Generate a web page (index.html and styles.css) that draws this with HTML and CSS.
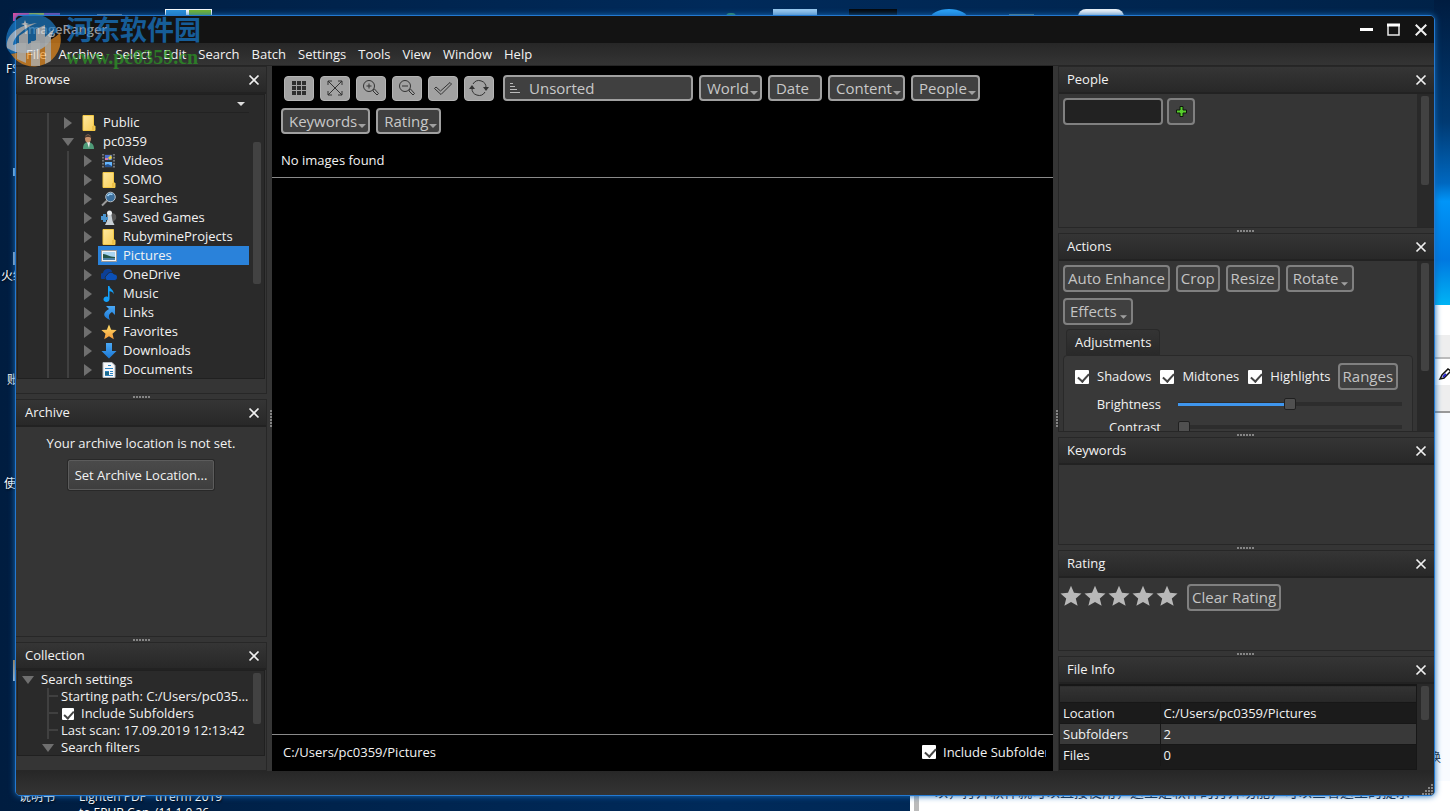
FILE: index.html
```html
<!DOCTYPE html>
<html lang="en">
<head>
<meta charset="utf-8">
<title>ImageRanger</title>
<link rel="stylesheet" href="styles.css">
</head>
<body>
<svg class="defs" aria-hidden="true">
  <defs>
    <linearGradient id="gold" x1="0" y1="0" x2="1" y2="1"><stop offset="0" stop-color="#ffe9a0"/><stop offset="1" stop-color="#f7cd55"/></linearGradient>
    <linearGradient id="azure" x1="0" y1="0" x2="0" y2="1"><stop offset="0" stop-color="#4aa8f5"/><stop offset="1" stop-color="#1c78d4"/></linearGradient>
    <linearGradient id="starfill" x1="0" y1="0" x2="0" y2="1"><stop offset="0" stop-color="#ffdf6a"/><stop offset="1" stop-color="#f59a3a"/></linearGradient>
    <symbol id="close" viewBox="0 0 12 12"><path d="M1.5 1.5l9 9M10.500 1.500l-9 9" stroke="#f0f0f0" stroke-width="1.700" fill="none"/></symbol>
    <symbol id="folder" viewBox="0 0 16 16"><path d="M2 0.500h10.500V11h1.500v4.500H2z" fill="url(#gold)" stroke="#f3c845" stroke-width="1"/><path d="M12 11v4" stroke="#e0ad32"/></symbol>
    <symbol id="star" viewBox="0 0 22 22"><path d="M11 .8l3 7 7.500.6-5.700 5 1.800 7.400L11 16.900 4.400 20.800l1.800-7.400-5.700-5 7.500-.6z"/></symbol>
    <symbol id="drop" viewBox="0 0 8 4"><path d="M0 0h8l-4 4z" fill="#a0a0a0"/></symbol>
    <symbol id="right" viewBox="0 0 8 12"><path d="M0 0l8 6-8 6z" fill="#6f6f6f"/></symbol>
    <symbol id="down" viewBox="0 0 12 8"><path d="M0 0h12l-6 8z" fill="#6f6f6f"/></symbol>
  </defs>
</svg>
<div class="desktop">
  <div class="wallpaper" aria-hidden="true">
    <span class="tile tile-pink"></span><span class="tile tile-duo"></span><span class="tile tile-gray"></span>
    <span class="tile tile-green"></span><span class="tile tile-sky"></span><span class="tile tile-black"></span>
    <span class="tile tile-round"></span><span class="tile tile-line"></span><span class="tile tile-white"></span>
    <span class="label label-fs">FS</span><span class="label label-huo">火绒</span><span class="label label-zhang">账</span><span class="label label-shi">使</span>
    <span class="tile tile-edge-a"></span><span class="tile tile-edge-b"></span><span class="tile tile-edge-c"></span>
    <span class="label label-manual">说明书</span><span class="label label-pdf">Lighten PDF</span><span class="label label-term">tiTerm 2019</span>
    <span class="label label-epub">to EPUB Con</span><span class="label label-ver">(11.1.0.26</span>
    <div class="notes-edge"><svg width="12" height="16" viewBox="0 0 12 16"><path d="M2 13l2-4 6-6 3 2-7 7z" fill="#fff" stroke="#111" stroke-width="1.500"/><path d="M5 11l3-3" stroke="#22c" stroke-width="2"/></svg></div>
    <div class="notes-bottom">以，打开软件就可以直接使用，这里是软件的打开功能，可以查看这里的提示</div>
    <span class="label label-huan">换</span>
  </div>

  <main class="window">
    <header class="titlebar">
      <h1>ImageRanger</h1>
      <div class="controls">
        <button aria-label="Minimize"><svg width="14" height="14"><path d="M0 5h13v3H0z" fill="#fff"/></svg></button>
        <button aria-label="Maximize"><svg width="14" height="14"><path d="M1 2h11v10H1z" fill="none" stroke="#e8e8e8" stroke-width="1.500"/><path d="M0 .5h13v3H0z" fill="#fff"/></svg></button>
        <button aria-label="Close"><svg width="14" height="14" viewBox="0 0 12 12"><use href="#close"/></svg></button>
      </div>
    </header>
    <nav class="menubar">
      <button>File</button><button>Archive</button><button>Select</button><button>Edit</button><button>Search</button><button>Batch</button><button>Settings</button><button>Tools</button><button>View</button><button>Window</button><button>Help</button>
    </nav>

    <div class="work">
      <aside class="dock dock-left">
        <section class="panel">
          <header class="panel-head"><h2>Browse</h2><button aria-label="Close Browse"><svg width="12" height="12"><use href="#close"/></svg></button></header>
          <div class="inset browse">
            <div class="combo"><select aria-label="Drive"><option></option></select><svg width="8" height="4"><path d="M0 0h8l-4 4z" fill="#ddd"/></svg></div>
            <div class="scroller">
              <ul class="tree">
                <li class="lvl1"><svg class="arrow" width="8" height="12"><use href="#right"/></svg><svg class="ico" width="16" height="16"><use href="#folder"/></svg><span>Public</span></li>
                <li class="lvl1"><svg class="arrow" width="12" height="8"><use href="#down"/></svg><svg class="ico" width="16" height="16"><path d="M2 15c0-5 2-7 5-7s6 2 6 7z" fill="#4f9a78"/><path d="M6 8l2 6 1-6z" fill="#eee"/><ellipse cx="7" cy="4.500" rx="3" ry="4" fill="#c9926c"/><path d="M3.500 4C3.500 0 10.500 0 10.500 4 9 2.500 5 2.500 3.500 4z" fill="#4a3a30"/></svg><span>pc0359</span></li>
                <li class="lvl2"><svg class="arrow" width="8" height="12"><use href="#right"/></svg><svg class="ico" width="16" height="16"><path d="M1 1h13v14H1z" fill="#33363a"/><path d="M2 1v14M13 1v14" stroke="#8a8a8a" stroke-width="1.500" stroke-dasharray="1.500 1.500"/><path d="M4 2h7v5H4z" fill="#4a6fd0"/><path d="M4 9h7v5H4z" fill="#65b6ff"/><path d="M7 5l3-3 1 3-2 2z" fill="#e8cc3b"/><path d="M4 5h3v2H4z" fill="#d27ab0"/><path d="M4 12l3-1 4 2v1H4z" fill="#24518e"/></svg><span>Videos</span></li>
                <li class="lvl2"><svg class="arrow" width="8" height="12"><use href="#right"/></svg><svg class="ico" width="16" height="16"><use href="#folder"/></svg><span>SOMO</span></li>
                <li class="lvl2"><svg class="arrow" width="8" height="12"><use href="#right"/></svg><svg class="ico" width="16" height="16"><path d="M1 14.500l5-5" stroke="#9b9b9b" stroke-width="2"/><circle cx="9.500" cy="6" r="4.800" fill="#3c6f9c" stroke="#b5bec6" stroke-width="1"/><path d="M6.500 5a4 4 0 0 1 5-1.500" stroke="#9fd0f4" stroke-width="1.500" fill="none"/></svg><span>Searches</span></li>
                <li class="lvl2"><svg class="arrow" width="8" height="12"><use href="#right"/></svg><svg class="ico" width="16" height="16"><path d="M10 3c4 0 6 2 5 6l-4 4z" fill="#555"/><circle cx="8.500" cy="3" r="2.500" fill="#e9edf0"/><path d="M6.500 5h4l1 6 2 4H4l2-4z" fill="#c8d0d6"/><path d="M0 6h2V4h3v3h2v3H5v2H2v-2H0z" fill="#4a94cf"/></svg><span>Saved Games</span></li>
                <li class="lvl2"><svg class="arrow" width="8" height="12"><use href="#right"/></svg><svg class="ico" width="16" height="16"><use href="#folder"/></svg><span>RubymineProjects</span></li>
                <li class="lvl2 selected"><svg class="arrow" width="8" height="12"><use href="#right"/></svg><svg class="ico" width="16" height="16"><path d="M.5 2.500h15v11H.5z" fill="#f4f4f4" stroke="#999"/><path d="M2 4h12v8H2z" fill="#a9d4f0"/><path d="M2 6c4 0 6 3 12 3v3H2z" fill="#235548"/><path d="M2 10h12v2H2z" fill="#4c80a6"/></svg><span>Pictures</span></li>
                <li class="lvl2"><svg class="arrow" width="8" height="12"><use href="#right"/></svg><svg class="ico" width="16" height="16"><path d="M2 12a3 3 0 0 1 0-6 5 5 0 0 1 9-2l-2 8z" fill="#0c3f96"/><path d="M6 13.500a3 3 0 0 1 0-5.500 4 4 0 0 1 7-1 3.300 3.300 0 0 1 1 6.500z" fill="#0b50b8" stroke="#252525" stroke-width=".7"/></svg><span>OneDrive</span></li>
                <li class="lvl2"><svg class="arrow" width="8" height="12"><use href="#right"/></svg><svg class="ico" width="16" height="16"><path d="M7 0h1.500c0 3 5 4 4 8-.6-2-2-2.500-4-2.800V13c0 4-6 3.500-6 .5 0-2.500 2.500-3.500 4.500-2.500z" fill="#14a0fa"/></svg><span>Music</span></li>
                <li class="lvl2"><svg class="arrow" width="8" height="12"><use href="#right"/></svg><svg class="ico" width="16" height="16"><path d="M5 1h9v9l-3-3c-3 2-4 4-2 8-7-3-8-7-1-11z" fill="url(#azure)"/></svg><span>Links</span></li>
                <li class="lvl2"><svg class="arrow" width="8" height="12"><use href="#right"/></svg><svg class="ico" width="16" height="16" viewBox="0 0 22 22" fill="url(#starfill)"><use href="#star"/></svg><span>Favorites</span></li>
                <li class="lvl2"><svg class="arrow" width="8" height="12"><use href="#right"/></svg><svg class="ico" width="16" height="16"><path d="M5 0h6v8h4.500L8 15.500.5 8H5z" fill="url(#azure)"/></svg><span>Downloads</span></li>
                <li class="lvl2"><svg class="arrow" width="8" height="12"><use href="#right"/></svg><svg class="ico" width="16" height="16"><path d="M2 .5h9l3 3v12H2z" fill="#f6f8fa" stroke="#b5bbc0"/><path d="M7 3.500h3M4 6.500h8M4 9.500h4M9 9.500h3M9 11.500h3M4 13.500h8" stroke="#2d84c4"/><path d="M4 10h4v3H4z" fill="#1c6a8a"/></svg><span>Documents</span></li>
              </ul>
              <div class="bar"><i class="thumb thumb-tree"></i></div>
            </div>
          </div>
        </section>
        <div class="splitter"></div>
        <section class="panel">
          <header class="panel-head"><h2>Archive</h2><button aria-label="Close Archive"><svg width="12" height="12"><use href="#close"/></svg></button></header>
          <div class="panel-body archive"><p>Your archive location is not set.</p><button class="plain">Set Archive Location...</button></div>
        </section>
        <div class="splitter"></div>
        <section class="panel">
          <header class="panel-head"><h2>Collection</h2><button aria-label="Close Collection"><svg width="12" height="12"><use href="#close"/></svg></button></header>
          <div class="inset scroller">
            <ul class="tree compact">
              <li class="top"><svg width="12" height="8"><use href="#down"/></svg><span>Search settings</span></li>
              <li class="leaf"><span>Starting path: C:/Users/pc0359/Pictures</span></li>
              <li class="leaf"><label class="check small"><input type="checkbox" checked>Include Subfolders</label></li>
              <li class="leaf"><span>Last scan: 17.09.2019 12:13:42</span></li>
              <li class="sub"><svg width="12" height="8"><use href="#down"/></svg><span>Search filters</span></li>
            </ul>
            <div class="bar narrow"><i class="thumb thumb-collection"></i></div>
          </div>
        </section>
      </aside>
      <div class="splitter vertical"></div>

      <section class="viewer">
        <div class="toolbar">
          <div class="tools">
            <button aria-label="Thumbnails"><svg width="20" height="20"><path d="M3 3h4v4H3zM8 3h4v4H8zM13 3h4v4h-4zM3 8h4v4H3zM8 8h4v4H8zM13 8h4v4h-4zM3 13h4v4H3zM8 13h4v4H8zM13 13h4v4h-4z" fill="#2e2e2e" stroke="none"/></svg></button>
            <button aria-label="Fit to window"><svg width="20" height="20"><path d="M3 3l14 14M17 3L3 17M3 7V3h4M13 3h4v4M17 13v4h-4M7 17H3v-4"/></svg></button>
            <button aria-label="Zoom in"><svg width="20" height="20"><circle cx="8" cy="8" r="5.500"/><path d="M8 5.500v5M5.500 8h5M12 12l1.500-1 4 4.500-1.500 1.500-4-4z"/></svg></button>
            <button aria-label="Zoom out"><svg width="20" height="20"><circle cx="8" cy="8" r="5.500"/><path d="M5 8h6M12 12l1.500-1 4 4.500-1.500 1.500-4-4z"/></svg></button>
            <button aria-label="Select all"><svg width="20" height="20"><path d="M1.500 10.500l1.500-1.500 4.500 4L17 4.500l1.500 1.500L8 16.500z"/></svg></button>
            <button aria-label="Refresh"><svg width="20" height="20"><path d="M4 6a7 7 0 0 1 13 4M16 14A7 7 0 0 1 3 10"/><path d="M14 9h6l-3 4zM0 11h6L3 7z" fill="#333" stroke="none"/></svg></button>
          </div>
          <div class="sort"><svg width="12" height="14"><path d="M1 2.500h3M1 5.500h5M1 8.500h7M1 11.500h10" stroke="#bbb"/></svg><select aria-label="Sort order"><option>Unsorted</option></select></div>
          <button class="chip">World<svg width="8" height="4"><use href="#drop"/></svg></button>
          <button class="chip date">Date</button>
          <button class="chip">Content<svg width="8" height="4"><use href="#drop"/></svg></button>
          <button class="chip">People<svg width="8" height="4"><use href="#drop"/></svg></button>
          <button class="chip">Keywords<svg width="8" height="4"><use href="#drop"/></svg></button>
          <button class="chip">Rating<svg width="8" height="4"><use href="#drop"/></svg></button>
        </div>
        <p class="message">No images found</p>
        <div class="canvas"></div>
        <footer class="pathbar"><span>C:/Users/pc0359/Pictures</span><label class="check"><input type="checkbox" checked><span>Include Subfolders</span></label></footer>
      </section>
      <div class="splitter vertical"></div>

      <aside class="dock dock-right">
        <section class="panel">
          <header class="panel-head"><h2>People</h2><button aria-label="Close People"><svg width="12" height="12"><use href="#close"/></svg></button></header>
          <div class="scroller panel-body">
            <div class="people"><input type="text" aria-label="Person name"><button class="action add" aria-label="Add person"><svg width="11" height="11"><path d="M4 .5h3V4h3.500v3H7v3.500H4V7H.5V4H4z" fill="#57cf2c" stroke="#0c1a08"/></svg></button></div>
            <div class="bar wide"><i class="thumb thumb-people"></i></div>
          </div>
        </section>
        <div class="splitter"></div>
        <section class="panel">
          <header class="panel-head"><h2>Actions</h2><button aria-label="Close Actions"><svg width="12" height="12"><use href="#close"/></svg></button></header>
          <div class="scroller panel-body">
            <div class="actions">
              <div class="action-row">
                <button class="action">Auto Enhance</button><button class="action">Crop</button><button class="action">Resize</button><button class="action menu">Rotate<svg width="7" height="4"><use href="#drop"/></svg></button><button class="action menu">Effects<svg width="7" height="4"><use href="#drop"/></svg></button>
              </div>
              <h3 class="tab">Adjustments</h3>
              <div class="tabpage">
                <div class="tones">
                  <label class="check"><input type="checkbox" checked>Shadows</label>
                  <label class="check"><input type="checkbox" checked>Midtones</label>
                  <label class="check"><input type="checkbox" checked>Highlights</label>
                  <button class="action">Ranges</button>
                </div>
                <div class="slider"><label for="brightness">Brightness</label><input id="brightness" class="half" type="range" value="50"></div>
                <div class="slider"><label for="contrast">Contrast</label><input id="contrast" type="range" value="0"></div>
              </div>
            </div>
            <div class="bar wide"><i class="thumb thumb-actions"></i></div>
          </div>
        </section>
        <div class="splitter"></div>
        <section class="panel">
          <header class="panel-head"><h2>Keywords</h2><button aria-label="Close Keywords"><svg width="12" height="12"><use href="#close"/></svg></button></header>
          <div class="panel-body"></div>
        </section>
        <div class="splitter"></div>
        <section class="panel">
          <header class="panel-head"><h2>Rating</h2><button aria-label="Close Rating"><svg width="12" height="12"><use href="#close"/></svg></button></header>
          <div class="panel-body rating">
            <button class="star" aria-label="1 star"><svg width="22" height="22"><use href="#star"/></svg></button><button class="star" aria-label="2 stars"><svg width="22" height="22"><use href="#star"/></svg></button><button class="star" aria-label="3 stars"><svg width="22" height="22"><use href="#star"/></svg></button><button class="star" aria-label="4 stars"><svg width="22" height="22"><use href="#star"/></svg></button><button class="star" aria-label="5 stars"><svg width="22" height="22"><use href="#star"/></svg></button>
            <button class="action">Clear Rating</button>
          </div>
        </section>
        <div class="splitter"></div>
        <section class="panel">
          <header class="panel-head"><h2>File Info</h2><button aria-label="Close File Info"><svg width="12" height="12"><use href="#close"/></svg></button></header>
          <div class="scroller panel-body">
            <div class="info">
              <table>
                <colgroup><col class="name-col"><col></colgroup>
                <thead><tr><td colspan="2"></td></tr></thead>
                <tbody>
                  <tr><th scope="row">Location</th><td>C:/Users/pc0359/Pictures</td></tr>
                  <tr><th scope="row">Subfolders</th><td>2</td></tr>
                  <tr><th scope="row">Files</th><td>0</td></tr>
                </tbody>
              </table>
            </div>
            <div class="bar wide"><i class="thumb thumb-info"></i></div>
          </div>
        </section>
      </aside>
    </div>
    <footer class="statusbar"><svg width="12" height="12"><path d="M9 1h2v2H9zM6 4h2v2H6zM9 4h2v2H9zM3 7h2v2H3zM6 7h2v2H6zM9 7h2v2H9zM0 10h2v2H0zM3 10h2v2H3zM6 10h2v2H6zM9 10h2v2H9z" fill="#858585"/></svg></footer>
  </main>

  <div class="watermark">
    <svg width="56" height="56" viewBox="0 0 56 56">
      <path d="M1 32A27 27 0 0 1 53 20C40 30 22 40 6 43 3 40 1 36 1 32z" fill="#1b7cc8"/>
      <path d="M6 43C24 40 44 32 55 22A27 27 0 0 1 6 43z" fill="#f0901e"/>
      <path d="M2 37C0 25 12 14 32 12 19 17 8 26 8 34l6-2V25l9-6v14l8-4V18l9-4v12l9-8-4 12C38 41 18 47 2 37z" fill="#d9dee2"/>
      <path d="M12 32h9v20l-9-4zM26 30h9v25h-9zM40 26h6v24l-6 3z" fill="#e4e8eb" opacity=".8"/>
      <path d="M20 9l1 3 3 1-3 1-1 3-1-3-3-1 3-1z" fill="#fff"/>
    </svg>
    <div class="watermark-text"><strong>河东软件园</strong><em>www.pc0359.cn</em></div>
  </div>
</div>
</body>
</html>
```

FILE: styles.css
```css
* { box-sizing: border-box; }
body { margin: 0; font: 13px/17px "Open Sans", "Noto Sans CJK SC", sans-serif; color: #f2f2f2; }
button, input, select { font: inherit; color: inherit; margin: 0; }
button { background: none; border: 0; padding: 0; }
h1, h2, h3, p, ul { margin: 0; padding: 0; font-size: inherit; font-weight: 400; }
svg { display: block; flex: none; }
.defs { position: absolute; width: 0; height: 0; }

.desktop { position: relative; height: 100vh; padding: 15px; overflow: hidden; background: linear-gradient(90deg, #001d40, #002a5a 50%, #002248); }
.wallpaper { position: absolute; z-index: 0; inset: 0; overflow: hidden; }
.wallpaper::after { content: ""; position: absolute; z-index: -1; top: 0; right: 0; width: 16px; height: 305px; background: linear-gradient(#001c40, #013a72 40%, #0068c0 60%, #0095f8 66%, #0078e0 85%, #00b4f5); }
.tile { position: absolute; top: 9px; height: 8px; }
.tile-pink { left: 13px; top: 13px; width: 47px; background: linear-gradient(90deg, #e54aa0 35%, #b5c13a 35% 65%, #8a4bb0 65%); }
.tile-duo { left: 165px; width: 47px; border: 1px solid #fff; background: linear-gradient(90deg, #2d90d8 45%, #fff 45% 50%, #76b82e 50%); }
.tile-gray { left: 97px; top: 14px; width: 25px; background: #77808a; }
.tile-green { left: 726px; top: 13px; width: 10px; border-radius: 5px; background: #39945c; }
.tile-sky { left: 773px; width: 44px; background: #9bc9ef; }
.tile-black { left: 849px; width: 48px; background: #050608; }
.tile-round { left: 930px; width: 38px; height: 20px; border-radius: 50%; background: #2ba0f5; }
.tile-line { left: 1009px; top: 14px; width: 25px; background: #66857c; }
.tile-white { left: 1078px; width: 46px; border-radius: 10px 10px 0 0; background: #eef3f8; }
.tile-edge-a { left: 13px; top: 168px; width: 2px; background: #8fbfe8; }
.tile-edge-b { left: 13px; top: 252px; width: 2px; height: 13px; background: #9fb4cc; }
.tile-edge-c { left: 13px; top: 660px; width: 2px; height: 21px; background: linear-gradient(#d09040, #c5d5e5); }
.label { position: absolute; font-size: 12px; line-height: 16px; white-space: nowrap; color: #fff; text-shadow: 1px 1px 2px #000; }
.label-fs { left: 6px; top: 61px; }
.label-huo { left: 1px; top: 268px; }
.label-zhang { left: 7px; top: 372px; }
.label-shi { left: 4px; top: 476px; }
.label-manual { left: 19px; top: 789px; }
.label-pdf { left: 79px; top: 789px; }
.label-term { left: 155px; top: 789px; }
.label-epub { left: 79px; top: 805px; }
.label-ver { left: 155px; top: 805px; }
.label-huan { left: 1429px; top: 750px; color: #222; text-shadow: none; }
.notes-edge { position: absolute; right: 0; top: 305px; bottom: 0; width: 16px; padding-top: 61px; background: linear-gradient(#fff 30px, #eee 30px 52px, #bbb 52px 54px, #fff 54px 80px, #eee 80px 106px, #999 106px 108px, #f8fbff 108px); }
.notes-edge svg { margin-left: 4px; }
.notes-bottom { position: absolute; left: 910px; right: 0; bottom: 0; height: 30px; padding: 1px 0 0 20px; border-left: 4px solid #fff; background: #fff; box-shadow: inset 5px 0 #bbb; color: #1c2430; font-size: 14px; line-height: 20px; white-space: nowrap; }

.window { position: relative; z-index: 1; display: flex; flex-direction: column; height: 100%; overflow: hidden; border: 1px solid #2479d0; border-radius: 5px; background: #353535; box-shadow: 0 0 6px #1569b8; }
.titlebar { display: flex; justify-content: space-between; align-items: center; flex: none; height: 27px; padding: 0 6px 0 8px; background: #131313; }
.titlebar h1 { color: #9a9a9a; font-weight: 600; }
.controls { display: flex; gap: 13px; }
.menubar { display: flex; flex: none; height: 23px; padding: 0 4px; border-bottom: 1px solid #252525; background: linear-gradient(#272727, #343434); }
.menubar button { padding: 0 6px; }

.work { display: grid; flex: 1; min-height: 0; grid-template-columns: 251px 5px minmax(0, 1fr) 5px 376px; }
.dock { display: grid; grid-template-columns: minmax(0, 1fr); min-height: 0; min-width: 0; }
.dock-left { grid-template-rows: minmax(0, 328fr) 5px minmax(0, 238fr) 5px minmax(0, 129fr); }
.dock-right { grid-template-rows: minmax(0, 162fr) 5px minmax(0, 199fr) 5px minmax(0, 108fr) 5px minmax(0, 101fr) 5px minmax(0, 115fr); }
.splitter { background: repeating-linear-gradient(90deg, #858585 0 2px, transparent 2px 3px) center 2px / 18px 2px no-repeat; }
.splitter.vertical { background: repeating-linear-gradient(#858585 0 2px, transparent 2px 3px) 3px center / 2px 18px no-repeat; }
.panel { display: flex; flex-direction: column; min-height: 0; border: 1px solid #272727; }
.dock-left .panel { border-left: 0; }
.dock-right .panel { border-right: 0; }
.panel-head { display: flex; flex: none; justify-content: space-between; align-items: center; height: 27px; padding: 0 6px 0 9px; border-bottom: 2px solid #222; background: linear-gradient(#353535, #282828); }
.dock-right .panel-head { padding: 0 7px 0 8px; }
.panel-body { flex: 1; min-height: 0; }
.inset { margin: 0 1px 14px; border: 1px solid #202020; background: #2a2a2a; }
.browse { display: flex; flex: 1; flex-direction: column; min-height: 0; }
.combo { display: flex; flex: none; align-items: center; height: 18px; margin-right: 15px; padding-right: 4px; border-bottom: 1px solid #222; }
.combo select { flex: 1; height: 16px; appearance: none; border: 0; background: none; }
.scroller { display: flex; flex: 1; min-height: 0; overflow: hidden; }
.bar { flex: none; width: 15px; padding: 2px 3px 2px 4px; }
.bar.narrow { width: 12px; padding-left: 1px; }
.bar.wide { width: 17px; padding: 2px 5px 2px 4px; background: #292929; }
.thumb { display: block; border-radius: 2px; background: #424242; }
.thumb-tree { height: 142px; margin-top: 27px; }
.thumb-collection { height: 51px; }
.thumb-people { height: 89px; }
.thumb-actions { height: 108px; }
.thumb-info { height: 34px; }
.tree { flex: 1; min-width: 0; list-style: none; }
.tree li { display: flex; align-items: center; height: 19px; white-space: nowrap; }
.browse .tree { background: linear-gradient(#404040, #404040) 29px 0 / 2px 100% no-repeat, linear-gradient(#404040, #404040) 49px 38px / 2px 100% no-repeat; }
.arrow { margin: 0 2px; }
.tree .arrow[width="12"] { margin: 0; }
.ico { margin: 0 6px 0 7px; }
.lvl1 { padding-left: 44px; }
.lvl2 { padding-left: 64px; }
.selected { background: linear-gradient(#2a82da, #2a82da) 80px 0 no-repeat; }
.tree.compact { background: linear-gradient(#404040, #404040) 29px 17px / 2px 51px no-repeat; }
.compact li { height: 17px; }
.compact svg { margin-right: 7px; }
.compact .top { padding-left: 4px; }
.compact .sub { padding-left: 24px; }
.compact .leaf { padding-left: 43px; background: linear-gradient(#404040, #404040) 29px 7px / 11px 2px no-repeat; }
.leaf span { overflow: hidden; text-overflow: ellipsis; }
.archive { display: flex; flex-direction: column; align-items: center; padding-top: 8px; }
.plain { height: 30px; margin-top: 8px; padding: 0 6px; border: 1px solid #5c5c5c; border-radius: 2px; background: linear-gradient(#4a4a4a, #3e3e3e); box-shadow: 0 0 0 1px #282828; }

.check { display: flex; align-items: center; gap: 8px; white-space: nowrap; }
.check input { flex: none; width: 14px; height: 14px; appearance: none; border-radius: 1px; background: #fff; }
.check input::before { content: ""; display: block; width: 9px; height: 5px; margin: 3px 0 0 3px; border: solid #444; border-width: 0 0 2px 2px; transform: rotate(-48deg); }
.check.small { gap: 7px; padding-left: 1px; }
.check.small input { width: 12px; height: 12px; }
.check.small input::before { width: 8px; height: 4px; margin: 3px 0 0 2px; }

.viewer { display: flex; flex-direction: column; min-width: 0; background: #000; }
.toolbar { display: flex; flex-wrap: wrap; gap: 7px 6px; padding: 9px 9px 0; }
.tools { display: flex; align-items: center; gap: 6px; padding: 0 3px; }
.tools button { display: grid; place-items: center; width: 30px; height: 25px; border: 1px solid #b5b5b5; border-radius: 4px; background: #a2a2a2; }
.tools svg { fill: none; stroke: #333; stroke-width: 1; }
.sort { display: flex; align-items: center; width: 190px; height: 26px; padding: 0 4px; gap: 8px; border: 2px solid #a0a0a0; border-radius: 4px; background: #404040; font-size: 15px; color: #c8c8c8; }
.sort select { flex: 1; height: 22px; padding: 0; appearance: none; border: 0; background: none; }
.chip { display: flex; align-items: center; height: 26px; padding: 0 2px 0 6px; border: 2px solid #a0a0a0; border-radius: 4px; background: #404040; font-size: 15px; line-height: 22px; color: #c8c8c8; }
.chip svg { margin-top: 9px; margin-left: 1px; }
.chip.date { padding-right: 11px; }
.message { padding: 17px 9px 8px; border-bottom: 1px solid #8a8a8a; line-height: 18px; }
.canvas { flex: 1; }
.pathbar { display: flex; justify-content: space-between; align-items: center; height: 37px; padding: 0 7px 2px 11px; border-top: 1px solid #8a8a8a; }
.pathbar .check { gap: 7px; width: 124px; overflow: hidden; }

.action { display: flex; flex: none; align-items: center; height: 27px; padding: 0 3px; border: 2px solid #808080; border-radius: 4px; background: #404040; font-size: 15px; color: #c4c4c4; }
.action.menu { padding: 0 4px 0 5px; }
.action.menu svg { margin: 10px 0 0 3px; }
.people { display: flex; flex: 1; align-items: flex-start; gap: 4px; padding: 4px; }
.people input { width: 100px; height: 27px; border: 2px solid #808080; border-radius: 4px; background: #222; }
.action.add { width: 28px; justify-content: center; padding: 0; }
.actions { flex: 1; min-width: 0; padding: 4px; }
.action-row { display: flex; flex-wrap: wrap; gap: 6px; }
.tab { width: max-content; height: 26px; margin: 4px 0 0 3px; padding: 4px 8px; border: 1px solid #292929; border-bottom: 0; border-radius: 4px 4px 0 0; background: linear-gradient(#343434, #292929); }
.tabpage { padding: 7px 11px 0; border: 1px solid #292929; border-radius: 4px; background: #393939; }
.tones { display: flex; align-items: center; }
.tones .check { margin-right: 9px; }
.tones .action { margin-left: -2px; }
.slider { display: grid; grid-template-columns: 86px 1fr; align-items: center; gap: 17px; height: 23px; margin-right: -1px; padding-top: 5px; }
.slider label { text-align: right; }
.slider input { width: 100%; height: 14px; appearance: none; background: linear-gradient(#2d2d2d, #2d2d2d) center / 100% 4px no-repeat; }
.slider .half { background: linear-gradient(#3f96ee, #3f96ee) 0 center / 50% 3px no-repeat, linear-gradient(#2d2d2d, #2d2d2d) center / 100% 4px no-repeat; }
.slider input::-webkit-slider-thumb { width: 12px; height: 12px; appearance: none; border: 1px solid #202020; border-radius: 2px; background: #505050; }
.rating { display: flex; align-items: flex-start; gap: 2px; padding: 6px 1px; }
.star { height: 23px; fill: #b8b8b8; }
.rating .action { margin-left: 7px; }
.info { flex: 1; border: 1px solid #171717; background: #1b1b1b; }
.info table { width: 100%; border-collapse: collapse; table-layout: fixed; }
.name-col { width: 100px; }
.info td, .info th { height: 21px; padding: 0 3px; border-top: 1px solid #171717; font-weight: 400; text-align: left; }
.info th { border-right: 1px solid #171717; }
.info thead td { height: 17px; background: linear-gradient(#333, #282828); }
.info tbody tr:nth-child(2) { background: #393939; }
.statusbar { display: flex; flex: none; justify-content: flex-end; align-items: flex-end; height: 24px; background: linear-gradient(#272727, #343434); }

.watermark { position: absolute; z-index: 2; left: 5px; top: 11px; display: flex; gap: 5px; opacity: .68; pointer-events: none; }
.watermark-text { display: flex; flex-direction: column; }
.watermark strong { font: 700 27px/36px "Noto Sans CJK SC", sans-serif; color: #1880d8; }
.watermark em { font: 700 20px/20px "Liberation Serif", serif; color: #2b9f24; }
```
